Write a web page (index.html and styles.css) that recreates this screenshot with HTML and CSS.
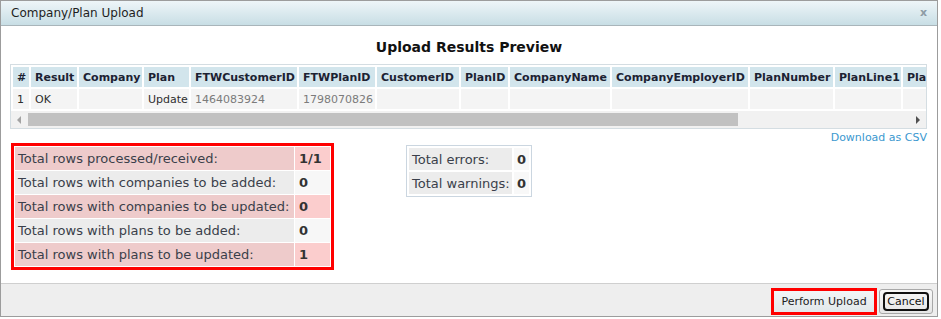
FILE: index.html
```html
<!DOCTYPE html>
<html>
<head>
<meta charset="utf-8">
<title>Company/Plan Upload</title>
<link rel="stylesheet" href="styles.css">
</head>
<body>
<div class="dialog">
  <div class="titlebar">
    <span class="title">Company/Plan Upload</span>
    <span class="close">x</span>
  </div>
  <div class="content">
    <h2 class="heading">Upload Results Preview</h2>
    <div class="grid-wrap">
      <table class="grid">
        <thead>
          <tr>
            <th class="w-num">#</th>
            <th class="w-result">Result</th>
            <th class="w-company">Company</th>
            <th class="w-plan">Plan</th>
            <th class="w-ftwc">FTWCustomerID</th>
            <th class="w-ftwp">FTWPlanID</th>
            <th class="w-cust">CustomerID</th>
            <th class="w-planid">PlanID</th>
            <th class="w-cname">CompanyName</th>
            <th class="w-ceid">CompanyEmployerID</th>
            <th class="w-pnum">PlanNumber</th>
            <th class="w-pl1">PlanLine1</th>
            <th class="w-pl2">PlanLine2</th>
          </tr>
        </thead>
        <tbody>
          <tr>
            <td>1</td>
            <td>OK</td>
            <td></td>
            <td>Update</td>
            <td class="muted">1464083924</td>
            <td class="muted">1798070826</td>
            <td></td>
            <td></td>
            <td></td>
            <td></td>
            <td></td>
            <td></td>
            <td></td>
          </tr>
        </tbody>
      </table>
      <div class="hscroll">
        <span class="arrow arrow-left"></span>
        <span class="thumb"></span>
        <span class="arrow arrow-right"></span>
      </div>
    </div>
    <div class="download-row"><a class="download" href="#">Download as CSV</a></div>
    <div class="stats">
      <div class="highlight">
        <table class="summary">
          <tr class="pink"><td class="lbl">Total rows processed/received:</td><td class="val">1/1</td></tr>
          <tr><td class="lbl">Total rows with companies to be added:</td><td class="val">0</td></tr>
          <tr class="pink"><td class="lbl">Total rows with companies to be updated:</td><td class="val">0</td></tr>
          <tr><td class="lbl">Total rows with plans to be added:</td><td class="val">0</td></tr>
          <tr class="pink"><td class="lbl">Total rows with plans to be updated:</td><td class="val">1</td></tr>
        </table>
      </div>
      <table class="errors">
        <tr><td class="lbl">Total errors:</td><td class="val">0</td></tr>
        <tr><td class="lbl">Total warnings:</td><td class="val">0</td></tr>
      </table>
    </div>
  </div>
  <div class="footer">
    <button class="btn btn-primary" type="button">Perform Upload</button>
    <button class="btn btn-cancel" type="button"><span class="focus">Cancel</span></button>
  </div>
</div>
</body>
</html>
```

FILE: styles.css
```css
html, body {
  margin: 0;
  padding: 0;
  background: #ffffff;
}

body {
  font-family: "DejaVu Sans", Verdana, sans-serif;
  font-size: 12px;
  color: #333333;
}

.dialog {
  width: 938px;
  height: 317px;
  box-sizing: border-box;
  border: 1px solid #9c9c9c;
  background: #ffffff;
  display: flex;
  flex-direction: column;
}

.titlebar {
  height: 24px;
  flex: none;
  border-bottom: 1px solid #a9b5ba;
  background: linear-gradient(#eef5f8, #c8dee5);
  display: flex;
  align-items: center;
  justify-content: space-between;
  padding: 0 10px 0 10px;
}

.title {
  color: #1e1e1e;
  font-size: 12px;
}

.close {
  color: #8d9ba4;
  font-weight: bold;
  font-size: 11px;
  margin-top: -1px;
}

.content {
  height: 257px;
  flex: none;
  box-sizing: border-box;
  padding: 11px 10px 0 9px;
}

.heading {
  margin: 0;
  height: 20px;
  line-height: 20px;
  font-size: 14px;
  font-weight: bold;
  text-align: center;
  color: #111111;
  padding-left: 1px;
}

.grid-wrap {
  margin-top: 7px;
  width: 917px;
  box-sizing: border-box;
  border: 1px solid #d4dde2;
  overflow: hidden;
}

.grid {
  table-layout: fixed;
  width: 964px;
  border-collapse: separate;
  border-spacing: 2px;
}

.grid th,
.grid td {
  box-sizing: border-box;
  height: 20px;
  padding: 0 3px 0 4px;
  text-align: left;
  white-space: nowrap;
  overflow: hidden;
  font-size: 11px;
}

.grid th {
  background: #d2e5ec;
  color: #1c2233;
  font-weight: bold;
}

.grid td {
  background: #f4f4f4;
  color: #2e2e2e;
}

.grid td.muted {
  color: #7b7b7b;
}

.w-num { width: 16px; }
.w-result { width: 46px; }
.w-company { width: 63px; }
.w-plan { width: 45px; }
.w-ftwc { width: 106px; }
.w-ftwp { width: 76px; }
.w-cust { width: 82px; }
.w-planid { width: 47px; }
.w-cname { width: 100px; }
.w-ceid { width: 136px; }
.w-pnum { width: 83px; }
.w-pl1 { width: 66px; }
.w-pl2 { width: 70px; }

.hscroll {
  height: 17px;
  background: #f1f1f1;
  position: relative;
}

.thumb {
  position: absolute;
  left: 17px;
  top: 2px;
  width: 710px;
  height: 13px;
  background: #c1c1c1;
}

.arrow {
  position: absolute;
  top: 5px;
  width: 0;
  height: 0;
  border-top: 4px solid transparent;
  border-bottom: 4px solid transparent;
}

.arrow-left {
  left: 6px;
  border-right: 4px solid #a3a3a3;
}

.arrow-right {
  right: 6px;
  border-left: 4px solid #505050;
}

.download-row {
  height: 14px;
  line-height: 16px;
  text-align: right;
  width: 917px;
}

.download {
  color: #3b98cf;
  text-decoration: none;
  font-size: 11px;
}

.stats {
  display: flex;
  align-items: flex-start;
  gap: 72px;
}

.highlight {
  margin-left: 1px;
  border: 3px solid #ff0000;
}

.summary {
  border-collapse: separate;
  border-spacing: 1px;
}

.summary td {
  height: 23px;
  padding: 0;
  font-size: 13px;
  white-space: nowrap;
}

.summary .lbl {
  width: 276px;
  padding-left: 3px;
  background: #ececec;
  color: #3a3f4a;
}

.summary .val {
  width: 31px;
  padding-left: 4px;
  background: #f7f7f7;
  font-weight: bold;
  color: #333333;
}

.summary .pink .lbl {
  background: #eecbcb;
}

.summary .pink .val {
  background: #fbcdcd;
}

.errors {
  margin-top: 2px;
  border: 1px solid #cbd6e0;
  border-collapse: separate;
  border-spacing: 2px;
}

.errors td {
  height: 22px;
  padding: 0;
  font-size: 13px;
  white-space: nowrap;
}

.errors .lbl {
  width: 100px;
  padding-left: 3px;
  background: #ececec;
  color: #3a3f4a;
}

.errors .val {
  width: 12px;
  padding-left: 3px;
  background: #f8f8f8;
  font-weight: bold;
  color: #333333;
}

.footer {
  flex: 1;
  border-top: 1px solid #cfcfcf;
  background: #eeeeee;
  display: flex;
  justify-content: flex-end;
  align-items: flex-start;
  padding: 4px 4px 0 0;
  gap: 2px;
}

.btn {
  font-family: "DejaVu Sans", Verdana, sans-serif;
  font-size: 11px;
  color: #222222;
  margin: 0;
  cursor: pointer;
}

.btn-primary {
  width: 106px;
  height: 27px;
  border: 3px solid #ff0000;
  background: linear-gradient(#f2f5f6, #e2e8eb);
  padding: 0;
}

.btn-cancel {
  margin-top: 1px;
  width: 54px;
  height: 25px;
  border: 1px solid #a8a8a8;
  border-radius: 3px;
  background: linear-gradient(#f8f8f8, #e6e6e6);
  padding: 0;
  display: flex;
  align-items: center;
  justify-content: center;
}

.focus {
  display: block;
  width: 46px;
  height: 19px;
  line-height: 15px;
  box-sizing: border-box;
  border: 2px solid #111111;
  border-radius: 4px;
  color: #111111;
}
```
